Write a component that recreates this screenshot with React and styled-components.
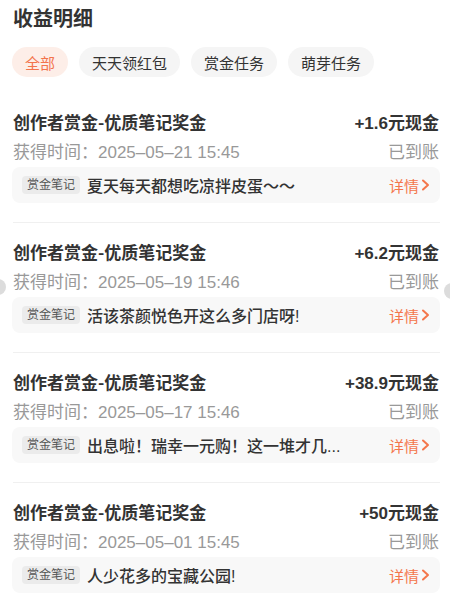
import React from "react";
import styled, { createGlobalStyle } from "styled-components";

const Global = createGlobalStyle`
  html, body { margin: 0; padding: 0; background: #fff; }
  body {
    font-family: "Liberation Sans", "Noto Sans CJK SC", sans-serif;
    color: #333;
    -webkit-font-smoothing: antialiased;
  }
`;

const Page = styled.div`
  position: relative;
  width: 450px;
  height: 602px;
  overflow: hidden;
  background: #fff;
`;

const Header = styled.h1`
  margin: 0;
  padding: 4px 13px 0;
  height: 30px;
  font-size: 20px;
  line-height: 30px;
  font-weight: 700;
  color: #333;
`;

const Chips = styled.div`
  display: flex;
  gap: 11px;
  padding: 13px 12px 0;
`;

const Chip = styled.div`
  height: 30px;
  padding: 0 13px;
  border-radius: 15px;
  display: flex;
  align-items: center;
  font-size: 15px;
  background: ${(p) => (p.$active ? "#fdeee8" : "#f5f5f5")};
  color: ${(p) => (p.$active ? "#f3744c" : "#333")};
`;

const List = styled.div`
  margin-top: 16px;
  padding: 0 10px 0 13px;
`;

const Card = styled.div`
  height: 130px;
  box-sizing: border-box;
  padding-top: 16px;
  border-bottom: 1px solid #f0f0f0;
  display: flex;
  flex-direction: column;
`;

const Row = styled.div`
  display: flex;
  justify-content: space-between;
  align-items: center;
  height: 24px;
  padding-right: 1px;
`;

const Title = styled.span`
  font-family: "Noto Sans CJK SC", sans-serif;
  font-size: 17px;
  font-weight: 700;
  color: #333;
`;

const Amount = styled.span`
  font-size: 17px;
  font-weight: 700;
  color: #333;
`;

const Meta = styled(Row)`
  margin-top: 5px;
  font-size: 17px;
  color: #999;
`;

const Note = styled.div`
  margin-top: 5px;
  margin-left: -1px;
  height: 36px;
  border-radius: 8px;
  background: #f8f8f8;
  display: flex;
  align-items: center;
  padding: 0 10px 0 10px;
  gap: 7px;
`;

const Tag = styled.span`
  flex: none;
  height: 18px;
  padding: 0 5px;
  border-radius: 4px;
  background: #ebebeb;
  color: #555;
  font-size: 12px;
  line-height: 18px;
`;

const NoteText = styled.span`
  flex: 1;
  min-width: 0;
  font-size: 16px;
  font-weight: 500;
  color: #333;
  white-space: nowrap;
  overflow: hidden;
`;

const Detail = styled.span`
  flex: none;
  display: flex;
  align-items: center;
  gap: 2px;
  color: #f4764b;
  font-size: 15px;
`;

const EdgeDot = styled.div`
  position: absolute;
  top: ${(p) => p.$top}px;
  ${(p) => (p.$side === "left" ? "left: -10px;" : "right: -10px;")}
  width: 16px;
  height: 16px;
  border-radius: 50%;
  background: #dcdcdc;
`;

const items = [
  { amount: "+1.6元现金", time: "2025–05–21 15:45", note: "夏天每天都想吃凉拌皮蛋～～" },
  { amount: "+6.2元现金", time: "2025–05–19 15:46", note: "活该茶颜悦色开这么多门店呀!" },
  { amount: "+38.9元现金", time: "2025–05–17 15:46", note: "出息啦！瑞幸一元购！这一堆才几..." },
  { amount: "+50元现金", time: "2025–05–01 15:45", note: "人少花多的宝藏公园!" },
];

const Chevron = () => (
  <svg width="9" height="12" viewBox="0 0 9 12" fill="none">
    <path d="M2 1.5 L7 6 L2 10.5" stroke="#f4764b" strokeWidth="2" strokeLinecap="round" strokeLinejoin="round" />
  </svg>
);

export default function App() {
  return (
    <Page>
      <Global />
      <Header>收益明细</Header>
      <Chips>
        <Chip $active>全部</Chip>
        <Chip>天天领红包</Chip>
        <Chip>赏金任务</Chip>
        <Chip>萌芽任务</Chip>
      </Chips>
      <List>
        {items.map((it, i) => (
          <Card key={i}>
            <Row>
              <Title>创作者赏金-优质笔记奖金</Title>
              <Amount>{it.amount}</Amount>
            </Row>
            <Meta>
              <span>获得时间：{it.time}</span>
              <span>已到账</span>
            </Meta>
            <Note>
              <Tag>赏金笔记</Tag>
              <NoteText>{it.note}</NoteText>
              <Detail>
                详情
                <Chevron />
              </Detail>
            </Note>
          </Card>
        ))}
      </List>
      <EdgeDot $side="left" $top={279} />
      <EdgeDot $side="right" $top={283} />
    </Page>
  );
}
